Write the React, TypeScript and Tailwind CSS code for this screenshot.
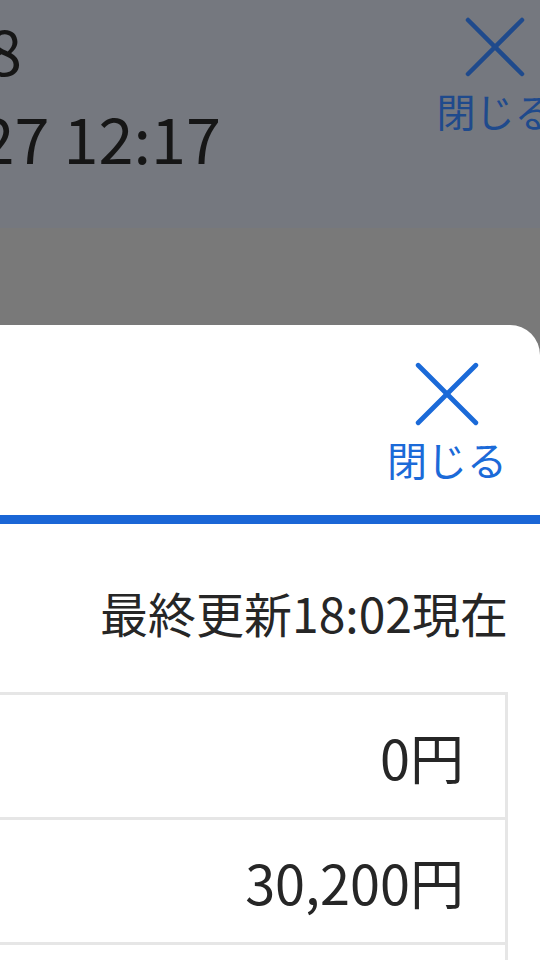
import React from "react";

function CloseX({ size, color, stroke }: { size: number; color: string; stroke: number }) {
  return (
    <svg width={size} height={size} viewBox="0 0 60 60" fill="none">
      <line x1="3" y1="3" x2="57" y2="57" stroke={color} strokeWidth={stroke} strokeLinecap="round" />
      <line x1="57" y1="3" x2="3" y2="57" stroke={color} strokeWidth={stroke} strokeLinecap="round" />
    </svg>
  );
}

export default function App() {
  return (
    <div className="w-[540px] h-[960px] overflow-hidden bg-[#797979] font-['Noto_Sans_CJK_JP',sans-serif]">
      {/* underlying page (dimmed) */}
      <div className="h-[228px] bg-[#75787f] flex justify-between">
        <div className="flex flex-col text-[#161616] text-[63px] leading-[88px] pt-[5px]">
          <div className="w-[22px] flex justify-end whitespace-nowrap">2024/02/28</div>
          <div className="w-[221px] flex justify-end whitespace-nowrap">2024/02/27 12:17</div>
        </div>
        <div className="flex flex-col items-center -mr-[14px] pt-[17px] w-[118px]">
          <CloseX size={60} color="#1f4a8c" stroke={4.5} />
          <div className="text-[39px] leading-[46px] text-[#1f4a8c] mt-[10px] whitespace-nowrap">閉じる</div>
        </div>
      </div>
      <div className="h-[97px]" />
      {/* bottom sheet */}
      <div className="bg-white rounded-tr-[30px] h-[640px]">
        <div className="h-[190px] flex justify-end pr-[33px] pt-[37px]">
          <div className="flex flex-col items-center w-[120px]">
            <CloseX size={64} color="#1b6ad8" stroke={4.5} />
            <div className="text-[40px] leading-[46px] text-[#1b6ad8] mt-[10px] whitespace-nowrap">閉じる</div>
          </div>
        </div>
        <div className="h-[9px] bg-[#1a66d6]" />
        <div className="pt-[52px] pr-[32px] text-right text-[48px] leading-[72px] text-[#262626]">
          最終更新18:02現在
        </div>
        <div className="mt-[44px] mr-[32px] border-t-[3px] border-r-[3px] border-[#e6e6e6]">
          <div className="h-[125px] border-b-[3px] border-[#e6e6e6] flex items-center justify-end pr-[41px] text-[54px] text-[#262626]">
            0円
          </div>
          <div className="h-[125px] border-b-[3px] border-[#e6e6e6] flex items-center justify-end pr-[41px] text-[54px] text-[#262626]">
            30,200円
          </div>
          <div className="h-[125px] border-b-[3px] border-[#e6e6e6]" />
        </div>
      </div>
    </div>
  );
}
